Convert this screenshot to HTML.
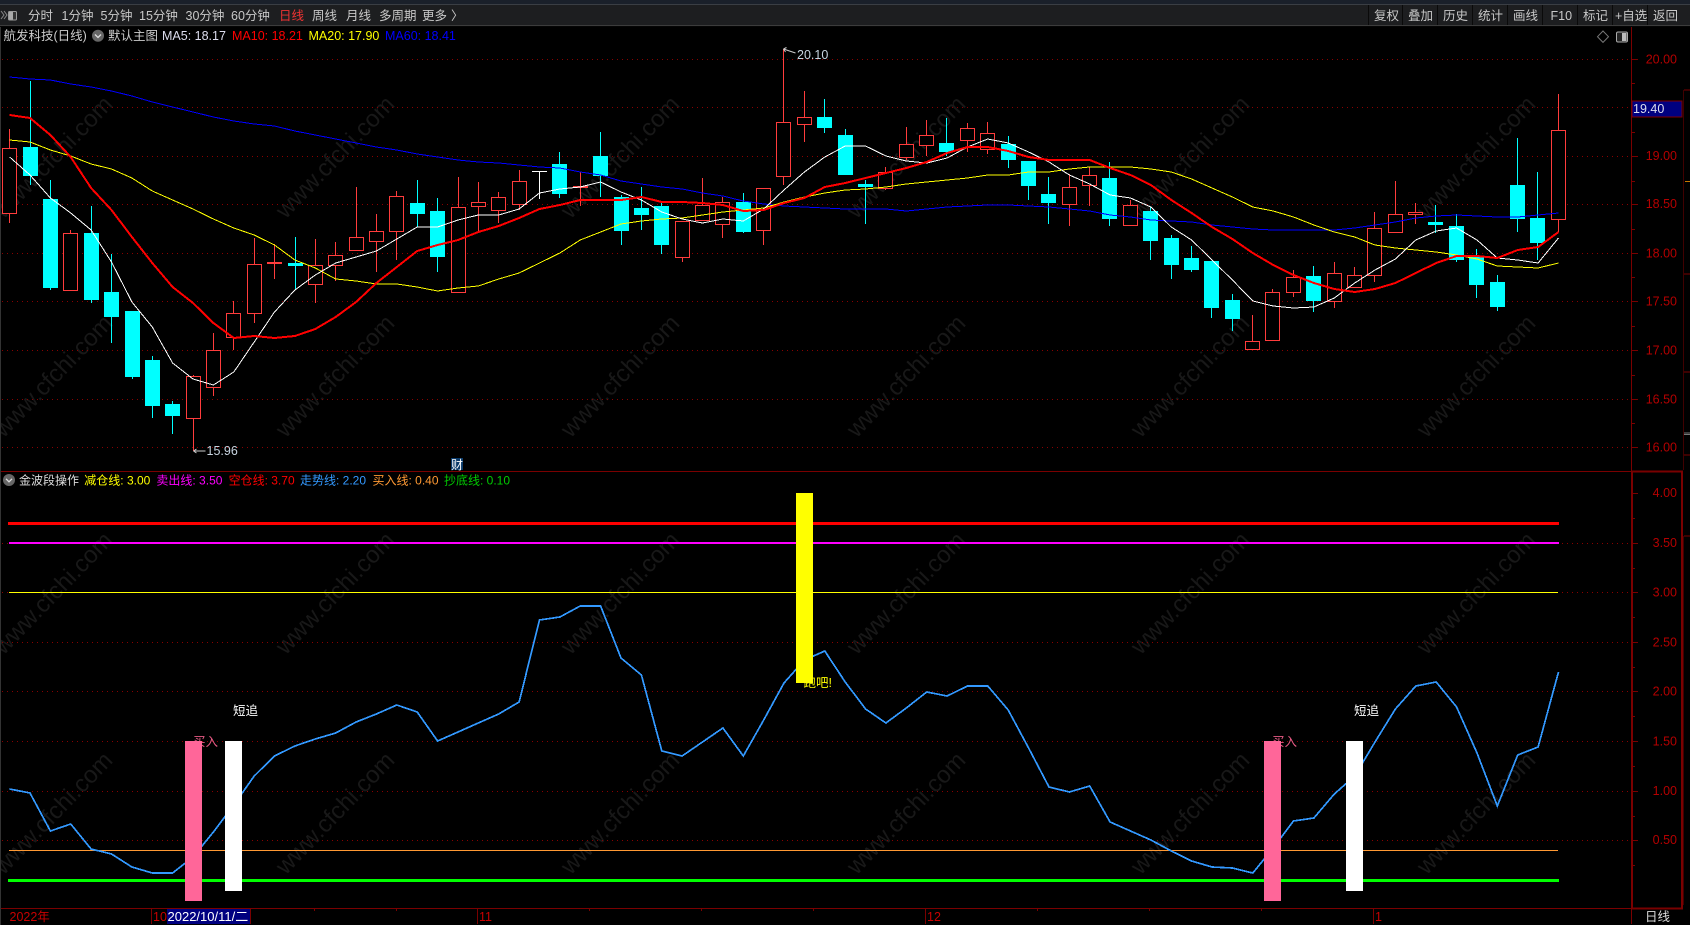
<!DOCTYPE html>
<html lang="zh"><head><meta charset="utf-8"><title>航发科技</title>
<style>
html,body{margin:0;padding:0;background:#000;width:1690px;height:925px;overflow:hidden}
svg{display:block;font-family:"Liberation Sans","Noto Sans CJK SC",sans-serif;font-size:12.5px}
.c{shape-rendering:crispEdges}
</style></head><body>
<svg width="1690" height="925" viewBox="0 0 1690 925" xmlns="http://www.w3.org/2000/svg">
<rect width="1690" height="925" fill="#000"/>
<!-- watermark -->
<g fill="#181818" font-size="24" text-anchor="middle">
<text transform="translate(53 157) rotate(-46)" y="8">www.cfchi.com</text><text transform="translate(335 157) rotate(-46)" y="8">www.cfchi.com</text><text transform="translate(620 157) rotate(-46)" y="8">www.cfchi.com</text><text transform="translate(906 157) rotate(-46)" y="8">www.cfchi.com</text><text transform="translate(1190 157) rotate(-46)" y="8">www.cfchi.com</text><text transform="translate(1476 157) rotate(-46)" y="8">www.cfchi.com</text>
<text transform="translate(53 376) rotate(-46)" y="8">www.cfchi.com</text><text transform="translate(335 376) rotate(-46)" y="8">www.cfchi.com</text><text transform="translate(620 376) rotate(-46)" y="8">www.cfchi.com</text><text transform="translate(906 376) rotate(-46)" y="8">www.cfchi.com</text><text transform="translate(1190 376) rotate(-46)" y="8">www.cfchi.com</text><text transform="translate(1476 376) rotate(-46)" y="8">www.cfchi.com</text>
<text transform="translate(53 593) rotate(-46)" y="8">www.cfchi.com</text><text transform="translate(335 593) rotate(-46)" y="8">www.cfchi.com</text><text transform="translate(620 593) rotate(-46)" y="8">www.cfchi.com</text><text transform="translate(906 593) rotate(-46)" y="8">www.cfchi.com</text><text transform="translate(1190 593) rotate(-46)" y="8">www.cfchi.com</text><text transform="translate(1476 593) rotate(-46)" y="8">www.cfchi.com</text>
<text transform="translate(53 813) rotate(-46)" y="8">www.cfchi.com</text><text transform="translate(335 813) rotate(-46)" y="8">www.cfchi.com</text><text transform="translate(620 813) rotate(-46)" y="8">www.cfchi.com</text><text transform="translate(906 813) rotate(-46)" y="8">www.cfchi.com</text><text transform="translate(1190 813) rotate(-46)" y="8">www.cfchi.com</text><text transform="translate(1476 813) rotate(-46)" y="8">www.cfchi.com</text>
</g>
<!-- toolbar -->
<g class="c">
<rect width="1690" height="4" fill="#1a202a"/><rect y="4" width="1690" height="1" fill="#3a3e44"/>
<rect y="5" width="1690" height="20" fill="#1d1e20"/><rect y="25" width="1690" height="1" fill="#3c3c3c"/><rect y="26" width="1690" height="1" fill="#050505"/>
<path d="M1368.5 5V25M1402.5 5V25M1437.5 5V25M1472.5 5V25M1507.5 5V25M1542.5 5V25M1577.5 5V25M1612.5 5V25M1647.5 5V25" stroke="#0a0a0a"/>
<rect x="0" y="27" width="1" height="898" fill="#333"/>
</g>
<path d="M1 11l3 4-3 4M4 11l3 4-3 4" fill="none" stroke="#888"/>
<rect x="8.5" y="11.5" width="8" height="8.5" rx="1" fill="#333" stroke="#999"/><rect x="9" y="12" width="4" height="7.5" fill="#aaa"/>
<g fill="#c8c8c8">
<text x="28" y="20">分时</text><text x="61.5" y="20">1分钟</text><text x="100.5" y="20">5分钟</text><text x="139" y="20">15分钟</text><text x="185.5" y="20">30分钟</text><text x="231" y="20">60分钟</text>
<text x="279" y="20" fill="#e33">日线</text><text x="312" y="20">周线</text><text x="346" y="20">月线</text><text x="379" y="20">多周期</text><text x="422" y="20">更多</text><text x="451" y="20">〉</text>
<text x="1374" y="20">复权</text><text x="1408" y="20">叠加</text><text x="1443" y="20">历史</text><text x="1478" y="20">统计</text><text x="1513" y="20">画线</text><text x="1550.5" y="20">F10</text><text x="1583" y="20">标记</text><text x="1615" y="20">+自选</text><text x="1653" y="20">返回</text>
</g>
<!-- grid -->
<g class="c" fill="none" stroke="#8a0000" stroke-dasharray="1 4">
<path d="M2 59.5H1631M2 107.5H1631M2 156.5H1631M2 204.5H1631M2 253.5H1631M2 301.5H1631M2 350.5H1631M2 399.5H1631M2 447.5H1631"/>
<path d="M2 543.5H1631M2 592.5H1631M2 642.5H1631M2 691.5H1631M2 741.5H1631M2 791.5H1631M2 840.5H1631"/>
</g>
<!-- frames -->
<g class="c" fill="none" stroke="#7a0000">
<path d="M1631.5 27V908M1 471.5H1632M1 908.5H1632"/>
<rect x="1632" y="471.5" width="50" height="437" stroke-width="2"/>
<path d="M1632 59.5h6M1632 107.5h6M1632 156.5h6M1632 204.5h6M1632 253.5h6M1632 301.5h6M1632 350.5h6M1632 399.5h6M1632 447.5h6M1632 83.5h3M1632 132.5h3M1632 181.5h3M1632 229.5h3M1632 277.5h3M1632 326.5h3M1632 375.5h3M1632 423.5h3"/>
<path d="M1632 493.5h6M1632 543.5h6M1632 592.5h6M1632 642.5h6M1632 691.5h6M1632 741.5h6M1632 791.5h6M1632 840.5h6M1632 518.5h3M1632 568.5h3M1632 617.5h3M1632 667.5h3M1632 716.5h3M1632 766.5h3M1632 816.5h3M1632 865.5h3"/>
<path d="M151.5 908V924M250.5 908V924M477.5 908V924M925.5 908V924M1373.5 908V924M1631.5 908V924M314.5 908v3M396.5 908v3M589.5 908v3M701.5 908v3M813.5 908v3M1037.5 908v3M1149.5 908v3M1261.5 908v3"/>
<path d="M1684 90H1690M1684 274H1690M1684 372H1690M1684 455H1690M1684 536H1690" />
<path d="M1683.5 90V470M1683.5 536V905" stroke="#400000"/>
<path d="M1685 181.5H1690" stroke="#c87800"/>
<path d="M1684 433H1690M1684 434.5H1690" stroke="#777"/>
</g>
<g class="c"><rect x="1632" y="101" width="50" height="16" fill="#000080" stroke="#800000"/></g>
<!-- red candles wicks -->
<path class="c" fill="none" stroke="#ff3c3c" d="M9.5 129V148M9.5 213V223M70.5 230V233M193.5 375V376M193.5 419V451M213.5 333V350M213.5 388V396M233.5 301V313M233.5 338V350M254.5 238V264M254.5 313V323M274.5 244V279M315.5 239V265M315.5 285V303M335.5 242V255M335.5 266V281M356.5 187V237M376.5 214V231M376.5 241V272M396.5 191V197M396.5 231V260M458.5 177V207M478.5 182V202M478.5 206V233M498.5 192V197M498.5 211V223M519.5 170V181M519.5 205V210M580.5 172V186M580.5 188V206M682.5 258V262M702.5 178V205M722.5 197V202M722.5 224V238M763.5 230V245M783.5 49V122M783.5 176V185M804.5 91V117M804.5 125V142M885.5 167V172M885.5 188V190M906.5 127V144M906.5 157V160M926.5 120V135M926.5 146V156M967.5 123V128M967.5 141V152M987.5 122V133M987.5 150V154M1069.5 174V187M1069.5 205V226M1089.5 167V175M1089.5 186V206M1130.5 200V205M1252.5 315V341M1272.5 289V292M1293.5 270V277M1293.5 293V297M1334.5 262V273M1334.5 302V308M1354.5 267V275M1374.5 212V228M1374.5 276V282M1395.5 181V214M1415.5 203V212M1415.5 215V224M1558.5 94V130M1558.5 219V232"/>
<!-- red bodies -->
<path class="c" fill="#000" stroke="#ff3c3c" d="M2.5 148.5h14V213.5h-14zM63.5 233.5h14V290.5h-14zM186.5 376.5h14V418.5h-14zM206.5 350.5h14V387.5h-14zM226.5 313.5h14V337.5h-14zM247.5 264.5h14V313.5h-14zM267.5 262.5h14V263.5h-14zM308.5 265.5h14V284.5h-14zM328.5 255.5h14V265.5h-14zM349.5 237.5h14V250.5h-14zM369.5 231.5h14V241.5h-14zM389.5 196.5h14V231.5h-14zM451.5 207.5h14V292.5h-14zM471.5 202.5h14V206.5h-14zM491.5 197.5h14V210.5h-14zM512.5 181.5h14V204.5h-14zM573.5 186.5h14V187.5h-14zM675.5 221.5h14V257.5h-14zM695.5 205.5h14V220.5h-14zM715.5 202.5h14V224.5h-14zM756.5 188.5h14V230.5h-14zM776.5 122.5h14V176.5h-14zM797.5 117.5h14V124.5h-14zM878.5 172.5h14V188.5h-14zM899.5 144.5h14V157.5h-14zM919.5 135.5h14V145.5h-14zM960.5 128.5h14V140.5h-14zM980.5 133.5h14V149.5h-14zM1062.5 187.5h14V204.5h-14zM1082.5 175.5h14V185.5h-14zM1123.5 205.5h14V225.5h-14zM1245.5 341.5h14V349.5h-14zM1265.5 292.5h14V340.5h-14zM1286.5 277.5h14V292.5h-14zM1327.5 273.5h14V301.5h-14zM1347.5 275.5h14V287.5h-14zM1367.5 228.5h14V275.5h-14zM1388.5 214.5h14V232.5h-14zM1408.5 212.5h14V214.5h-14zM1551.5 130.5h14V219.5h-14z"/>
<!-- cyan candles -->
<path class="c" fill="#0ff" d="M30 81h1V185h-1zM23 147h15V176h-15zM50 180h1V290h-1zM43 199h15V288h-15zM91 206h1V303h-1zM84 233h15V300h-15zM111 254h1V343h-1zM104 292h15V317h-15zM132 311h1V379h-1zM125 311h15V377h-15zM152 356h1V418h-1zM145 360h15V406h-15zM172 401h1V434h-1zM165 404h15V416h-15zM295 237h1V290h-1zM288 263h15V266h-15zM417 180h1V227h-1zM410 203h15V214h-15zM437 198h1V272h-1zM430 211h15V257h-15zM559 152h1V198h-1zM552 164h15V194h-15zM600 132h1V197h-1zM593 156h15V176h-15zM621 195h1V245h-1zM614 197h15V231h-15zM641 187h1V230h-1zM634 208h15V215h-15zM661 202h1V254h-1zM654 206h15V245h-15zM743 193h1V233h-1zM736 202h15V232h-15zM824 99h1V133h-1zM817 117h15V128h-15zM845 129h1V175h-1zM838 135h15V175h-15zM865 180h1V224h-1zM858 184h15V187h-15zM946 118h1V156h-1zM939 143h15V152h-15zM1008 136h1V168h-1zM1001 144h15V160h-15zM1028 161h1V200h-1zM1021 161h15V186h-15zM1048 177h1V224h-1zM1041 194h15V203h-15zM1109 162h1V226h-1zM1102 178h15V219h-15zM1150 207h1V260h-1zM1143 211h15V241h-15zM1171 235h1V279h-1zM1164 238h15V265h-15zM1191 246h1V272h-1zM1184 258h15V270h-15zM1211 261h1V318h-1zM1204 261h15V308h-15zM1232 294h1V331h-1zM1225 300h15V319h-15zM1313 266h1V312h-1zM1306 276h15V301h-15zM1435 205h1V233h-1zM1428 222h15V225h-15zM1456 214h1V262h-1zM1449 226h15V260h-15zM1476 249h1V298h-1zM1469 257h15V285h-15zM1497 275h1V311h-1zM1490 282h15V307h-15zM1517 138h1V232h-1zM1510 185h15V219h-15zM1537 172h1V260h-1zM1530 218h15V243h-15z"/>
<path class="c" fill="#fff" d="M539 171h1V199h-1zM532 171h15v1h-15z"/>
<!-- MA60 -->
<polyline class="c" fill="none" stroke="#00f" points="9.6,77 30,79 50.4,80 70.7,84 91.1,87 111.5,91 131.9,96 152.3,102 172.6,107 193,112 213.4,117 233.8,121 254.2,124 274.5,126 294.9,131 315.3,135 335.7,139 356.1,143 376.4,147 396.8,150 417.2,154 437.6,157 458,160 478.3,162 498.7,163 519.1,165 539.5,167 559.9,168 580.2,172 600.6,175 621,181 641.4,184 661.8,187 682.1,189 702.5,193 722.9,196 743.3,201 763.7,204 784,206 804.4,207 824.8,208 845.2,209 865.6,209 885.9,209 906.3,211 926.7,209 947.1,207 967.5,206 987.8,205 1008.2,205 1028.6,206 1049,207 1069.4,209 1089.7,211 1110.1,215 1130.5,217 1150.9,220 1171.3,221 1191.6,222 1212,225 1232.4,227 1252.8,229 1273.2,230 1293.5,230 1313.9,230 1334.3,230 1354.7,228 1375,225 1395.4,222 1415.8,218 1436.2,216 1456.6,215 1477,216 1497.3,217 1517.7,217 1538.1,215 1558.5,213"/>
<!-- MA20 -->
<polyline class="c" fill="none" stroke="#ff0" points="9.6,140 30,142 50.4,150 70.7,156 91.1,164 111.5,169 131.9,178 152.3,191 172.6,200 193,209 213.4,219 233.8,228 254.2,235 274.5,245 294.9,260 315.3,268 335.7,279 356.1,281 376.4,284 396.8,284 417.2,287 437.6,291 458,288 478.3,286 498.7,279 519.1,273 539.5,263 559.9,253 580.2,240 600.6,232 621,224 641.4,221 661.8,219 682.1,218 702.5,215 722.9,212 743.3,210 763.7,208 784,202 804.4,197 824.8,193 845.2,190 865.6,189 885.9,187 906.3,184 926.7,182 947.1,180 967.5,178 987.8,175 1008.2,175 1028.6,172 1049,172 1069.4,169 1089.7,167 1110.1,167 1130.5,167 1150.9,169 1171.3,172 1191.6,179 1212,188 1232.4,197 1252.8,207 1273.2,211 1293.5,217 1313.9,225 1334.3,232 1354.7,237 1375,245 1395.4,248 1415.8,250 1436.2,252 1456.6,255 1477,259 1497.3,266 1517.7,267 1538.1,268 1558.5,263"/>
<!-- MA5 -->
<polyline class="c" fill="none" stroke="#fff" points="9.6,157 30,175 50.4,198 70.7,213 91.1,230 111.5,262 131.9,302 152.3,327 172.6,363 193,379 213.4,385 233.8,372 254.2,342 274.5,312 294.9,290 315.3,275 335.7,263 356.1,257 376.4,251 396.8,239 417.2,227 437.6,227 458,220 478.3,215 498.7,215 519.1,209 539.5,193 559.9,189 580.2,187 600.6,182 621,192 641.4,200 661.8,212 682.1,219 702.5,223 722.9,219 743.3,221 763.7,209 784,190 804.4,172 824.8,157 845.2,146 865.6,146 885.9,156 906.3,161 926.7,163 947.1,158 967.5,147 987.8,139 1008.2,143 1028.6,152 1049,162 1069.4,175 1089.7,184 1110.1,195 1130.5,198 1150.9,207 1171.3,227 1191.6,240 1212,260 1232.4,280 1252.8,301 1273.2,306 1293.5,308 1313.9,307 1334.3,298 1354.7,283 1375,270 1395.4,259 1415.8,240 1436.2,231 1456.6,228 1477,240 1497.3,258 1517.7,260 1538.1,263 1558.5,238"/>
<!-- MA10 -->
<polyline class="c" fill="none" stroke="#f00" stroke-width="2" points="9.6,115 30,118 50.4,135 70.7,157 91.1,188 111.5,210 131.9,237 152.3,263 172.6,287 193,303 213.4,323 233.8,338 254.2,336 274.5,338 294.9,336 315.3,329 335.7,317 356.1,302 376.4,283 396.8,267 417.2,251 437.6,245 458,240 478.3,232 498.7,226 519.1,218 539.5,209 559.9,205 580.2,200 600.6,200 621,200 641.4,197 661.8,202 682.1,202 702.5,203 722.9,205 743.3,211 763.7,210 784,203 804.4,198 824.8,187 845.2,183 865.6,178 885.9,173 906.3,168 926.7,162 947.1,153 967.5,147 987.8,147 1008.2,151 1028.6,157 1049,160 1069.4,160 1089.7,160 1110.1,168 1130.5,175 1150.9,185 1171.3,200 1191.6,213 1212,227 1232.4,239 1252.8,253 1273.2,265 1293.5,275 1313.9,283 1334.3,289 1354.7,292 1375,289 1395.4,283 1415.8,273 1436.2,263 1456.6,256 1477,256 1497.3,258 1517.7,250 1538.1,247 1558.5,232"/>
<!-- lower pane lines -->
<g class="c">
<rect x="8" y="522" width="1551" height="3" fill="#f00"/>
<rect x="9" y="542" width="1550" height="2" fill="#f0f"/>
<rect x="9" y="592" width="1549" height="1" fill="#ff0"/>
<rect x="9" y="850" width="1549" height="1" fill="#f93"/>
<rect x="8" y="879" width="1551" height="3" fill="#0f0"/>
</g>
<polyline class="c" fill="none" stroke="#39f" stroke-width="1.7" points="9.6,789 30,793 50.4,831 70.7,824 91.1,849 111.5,854 131.9,867 152.3,873 172.6,873 193,857 213.4,832 233.8,805 254.2,776 274.5,756 294.9,746 315.3,739 335.7,733 356.1,722 376.4,714 396.8,705 417.2,712 437.6,741 458,732 478.3,723 498.7,714 519.1,702 539.5,620 559.9,617 580.2,606 600.6,606 621,658 641.4,675 661.8,751 682.1,756 702.5,742 722.9,728 743.3,756 763.7,720 784,683 804.4,660 824.8,651 845.2,682 865.6,709 885.9,723 906.3,708 926.7,692 947.1,696 967.5,686 987.8,686 1008.2,710 1028.6,748 1049,787 1069.4,792 1089.7,786 1110.1,822 1130.5,831 1150.9,840 1171.3,851 1191.6,861 1212,867 1232.4,868 1252.8,873 1273.2,848 1293.5,821 1313.9,818 1334.3,794 1354.7,776 1375,742 1395.4,709 1415.8,686 1436.2,682 1456.6,707 1477,753 1497.3,806 1517.7,755 1538.1,747 1558.5,672"/>
<!-- labels behind bars -->
<g font-size="12.5">
<text x="193" y="746" fill="#e85a85">买入</text><text x="1272" y="746" fill="#e85a85">买入</text>
<text x="803.5" y="687" fill="#ff0">跑吧!</text>
<text x="233" y="715" fill="#fff">短追</text><text x="1354" y="715" fill="#fff">短追</text>
</g>
<g class="c">
<rect x="185" y="741" width="17" height="160" fill="#f69"/><rect x="225" y="741" width="17" height="150" fill="#fff"/>
<rect x="1264" y="741" width="17" height="160" fill="#f69"/><rect x="1346" y="741" width="17" height="150" fill="#fff"/>
<rect x="796" y="493" width="17" height="190" fill="#ff0"/>
</g>
<!-- high low markers -->
<path d="M783.5 49l12 4M783.5 49l3-1.5M783.5 49l2 3M193.5 451h12M193.5 451l3-2M193.5 451l3 2" fill="none" stroke="#ccc"/>
<text x="797" y="59" fill="#c8d4e0">20.10</text><text x="206.5" y="455" fill="#c8d4e0">15.96</text>
<rect x="451" y="458" width="12" height="12" fill="#0a3a6a"/><text x="451" y="469" fill="#fff" font-size="12">财</text>
<!-- info lines -->
<text x="3.5" y="40" fill="#ccc">航发科技(日线)</text>
<circle cx="98" cy="35.7" r="6" fill="#666"/><path d="M95 34.5l3 3 3-3" fill="none" stroke="#ddd" stroke-width="1.3"/>
<text x="108" y="40" fill="#ccc">默认主图</text>
<text x="162" y="40" fill="#dde">MA5: 18.17</text><text x="232" y="40" fill="#f00">MA10: 18.21</text><text x="308.5" y="40" fill="#ff0">MA20: 17.90</text><text x="385" y="40" fill="#00f">MA60: 18.41</text>
<circle cx="9" cy="480" r="6" fill="#666"/><path d="M6 478.8l3 3 3-3" fill="none" stroke="#ddd" stroke-width="1.3"/>
<g font-size="12">
<text x="19" y="484.5" fill="#ddd">金波段操作</text>
<text x="84.3" y="484.5" fill="#ff0">减仓线: 3.00</text><text x="156.4" y="484.5" fill="#f0f">卖出线: 3.50</text><text x="228.6" y="484.5" fill="#f00">空仓线: 3.70</text><text x="300" y="484.5" fill="#39f">走势线: 2.20</text><text x="372.5" y="484.5" fill="#f93">买入线: 0.40</text><text x="444" y="484.5" fill="#0c0">抄底线: 0.10</text>
</g>
<!-- top right icons -->
<path d="M1603 31l5.5 5.7-5.5 5.7-5.5-5.7z" fill="none" stroke="#777"/>
<rect x="1616.5" y="32" width="11" height="10" rx="1.5" fill="#222" stroke="#aaa"/><rect x="1622" y="33" width="4.5" height="8" fill="#bbb"/>
<!-- axis labels -->
<g fill="#b40000" font-size="12.5" text-anchor="end">
<text x="1677" y="63.5">20.00</text><text x="1677" y="160">19.00</text><text x="1677" y="208">18.50</text><text x="1677" y="257.5">18.00</text><text x="1677" y="305.5">17.50</text><text x="1677" y="354.5">17.00</text><text x="1677" y="403.5">16.50</text><text x="1677" y="451.5">16.00</text>
<text x="1677" y="497">4.00</text><text x="1677" y="547">3.50</text><text x="1677" y="596.5">3.00</text><text x="1677" y="646.5">2.50</text><text x="1677" y="695.5">2.00</text><text x="1677" y="745.5">1.50</text><text x="1677" y="795">1.00</text><text x="1677" y="844">0.50</text>
</g>
<text x="1633" y="113" fill="#dde">19.40</text>
<!-- time axis -->
<g fill="#c80000" font-size="12.5">
<text x="9.5" y="921">2022年</text><text x="153" y="921">10</text><text x="479" y="921">11</text><text x="927" y="921">12</text><text x="1375" y="921">1</text>
</g>
<rect class="c" x="167" y="909" width="83" height="15" fill="#000080"/>
<text x="167.5" y="921" fill="#fff" font-size="13">2022/10/11/二</text>
<text x="1645" y="921" fill="#ddd">日线</text>
</svg>
</body></html>
